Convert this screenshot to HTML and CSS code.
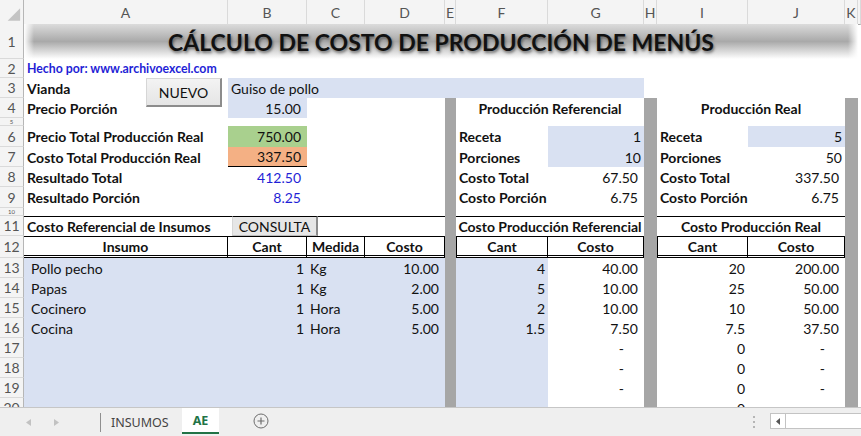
FILE: index.html
```html
<!DOCTYPE html>
<html lang="es">
<head>
  <meta charset="UTF-8">
  <title>Cálculo de costo de producción de menús</title>
  <link rel="stylesheet" href="styles.css">
</head>
<body>

  <div class="sheet">
    <!-- Cabecera de columnas -->
    <div class="row h24 colhead">
      <div class="corner"><svg width="24" height="24" viewBox="0 0 24 24"><polygon points="21,8 21,21 8,21" fill="#c4c4c4"/></svg></div>
      <div>A</div><div>B</div><div>C</div><div>D</div><div>E</div><div>F</div>
      <div>G</div><div>H</div><div>I</div><div>J</div><div>K</div><div></div>
    </div>

    <div class="row h35">
      <div class="rh">1</div>
      <div class="title">CÁLCULO DE COSTO DE PRODUCCIÓN DE MENÚS</div>
    </div>

    <div class="row h19">
      <div class="rh">2</div>
      <div class="cA w3 l credit">Hecho por: www.archivoexcel.com</div>
    </div>

    <div class="row h20">
      <div class="rh">3</div>
      <div class="cA l b">Vianda</div>
      <div class="cB w6 l fill">Guiso de pollo</div>
    </div>

    <div class="row h20">
      <div class="rh">4</div>
      <div class="cA l b">Precio Porción</div>
      <div class="cB acc fill">15.00</div>
      <div class="cE sep"></div>
      <div class="cF w2 c b">Producción Referencial</div>
      <div class="cH sep"></div>
      <div class="cI w2 c b">Producción Real</div>
      <div class="cK sep"></div>
    </div>

    <div class="row h8">
      <div class="rh short">5</div>
      <div class="cE sep"></div><div class="cH sep"></div><div class="cK sep"></div>
    </div>

    <div class="row h21">
      <div class="rh">6</div>
      <div class="cA l b">Precio Total Producción Real</div>
      <div class="cB acc green">750.00</div>
      <div class="cE sep"></div>
      <div class="cF l b">Receta</div>
      <div class="cG r fill">1</div>
      <div class="cH sep"></div>
      <div class="cI l b">Receta</div>
      <div class="cJ r fill">5</div>
      <div class="cK sep"></div>
    </div>

    <div class="row h20">
      <div class="rh">7</div>
      <div class="cA l b">Costo Total Producción Real</div>
      <div class="cB acc orange underline">337.50</div>
      <div class="cE sep"></div>
      <div class="cF l b">Porciones</div>
      <div class="cG r fill">10</div>
      <div class="cH sep"></div>
      <div class="cI l b">Porciones</div>
      <div class="cJ r">50</div>
      <div class="cK sep"></div>
    </div>

    <div class="row h20">
      <div class="rh">8</div>
      <div class="cA l b">Resultado Total</div>
      <div class="cB acc result">412.50</div>
      <div class="cE sep"></div>
      <div class="cF l b">Costo Total</div>
      <div class="cG acc">67.50</div>
      <div class="cH sep"></div>
      <div class="cI l b">Costo Total</div>
      <div class="cJ acc">337.50</div>
      <div class="cK sep"></div>
    </div>

    <div class="row h21">
      <div class="rh">9</div>
      <div class="cA l b">Resultado Porción</div>
      <div class="cB acc result">8.25</div>
      <div class="cE sep"></div>
      <div class="cF l b">Costo Porción</div>
      <div class="cG acc">6.75</div>
      <div class="cH sep"></div>
      <div class="cI l b">Costo Porción</div>
      <div class="cJ acc">6.75</div>
      <div class="cK sep"></div>
    </div>

    <div class="row h8">
      <div class="rh short">10</div>
      <div class="cE sep"></div><div class="cH sep"></div><div class="cK sep"></div>
    </div>

    <div class="row h20">
      <div class="rh">11</div>
      <div class="cA w4 l b top">Costo Referencial de Insumos</div>
      <div class="cE sep"></div>
      <div class="cF w2 c b top">Costo Producción Referencial</div>
      <div class="cH sep"></div>
      <div class="cI w2 c b top">Costo Producción Real</div>
      <div class="cK sep"></div>
    </div>

    <div class="row h22">
      <div class="rh">12</div>
      <div class="cA th">Insumo</div>
      <div class="cB th">Cant</div>
      <div class="cC th">Medida</div>
      <div class="cD th">Costo</div>
      <div class="cE sep"></div>
      <div class="cF th first">Cant</div>
      <div class="cG th">Costo</div>
      <div class="cH sep"></div>
      <div class="cI th first">Cant</div>
      <div class="cJ th">Costo</div>
      <div class="cK sep"></div>
    </div>

    <div class="row h20">
      <div class="rh">13</div>
      <div class="cA in fill">Pollo pecho</div>
      <div class="cB r fill">1</div>
      <div class="cC l fill">Kg</div>
      <div class="cD acc fill">10.00</div>
      <div class="cE sep"></div>
      <div class="cF r fill">4</div>
      <div class="cG acc">40.00</div>
      <div class="cH sep"></div>
      <div class="cI r">20</div>
      <div class="cJ acc">200.00</div>
      <div class="cK sep"></div>
    </div>

    <div class="row h20">
      <div class="rh">14</div>
      <div class="cA in fill">Papas</div>
      <div class="cB r fill">1</div>
      <div class="cC l fill">Kg</div>
      <div class="cD acc fill">2.00</div>
      <div class="cE sep"></div>
      <div class="cF r fill">5</div>
      <div class="cG acc">10.00</div>
      <div class="cH sep"></div>
      <div class="cI r">25</div>
      <div class="cJ acc">50.00</div>
      <div class="cK sep"></div>
    </div>

    <div class="row h20">
      <div class="rh">15</div>
      <div class="cA in fill">Cocinero</div>
      <div class="cB r fill">1</div>
      <div class="cC l fill">Hora</div>
      <div class="cD acc fill">5.00</div>
      <div class="cE sep"></div>
      <div class="cF r fill">2</div>
      <div class="cG acc">10.00</div>
      <div class="cH sep"></div>
      <div class="cI r">10</div>
      <div class="cJ acc">50.00</div>
      <div class="cK sep"></div>
    </div>

    <div class="row h20">
      <div class="rh">16</div>
      <div class="cA in fill">Cocina</div>
      <div class="cB r fill">1</div>
      <div class="cC l fill">Hora</div>
      <div class="cD acc fill">5.00</div>
      <div class="cE sep"></div>
      <div class="cF r fill">1.5</div>
      <div class="cG acc">7.50</div>
      <div class="cH sep"></div>
      <div class="cI r">7.5</div>
      <div class="cJ acc">37.50</div>
      <div class="cK sep"></div>
    </div>

    <div class="row h20">
      <div class="rh">17</div>
      <div class="cA w4 fill"></div>
      <div class="cE sep"></div>
      <div class="cF fill"></div>
      <div class="cG dash">-</div>
      <div class="cH sep"></div>
      <div class="cI r">0</div>
      <div class="cJ dash">-</div>
      <div class="cK sep"></div>
    </div>

    <div class="row h20">
      <div class="rh">18</div>
      <div class="cA w4 fill"></div>
      <div class="cE sep"></div>
      <div class="cF fill"></div>
      <div class="cG dash">-</div>
      <div class="cH sep"></div>
      <div class="cI r">0</div>
      <div class="cJ dash">-</div>
      <div class="cK sep"></div>
    </div>

    <div class="row h20">
      <div class="rh">19</div>
      <div class="cA w4 fill"></div>
      <div class="cE sep"></div>
      <div class="cF fill"></div>
      <div class="cG dash">-</div>
      <div class="cH sep"></div>
      <div class="cI r">0</div>
      <div class="cJ dash">-</div>
      <div class="cK sep"></div>
    </div>

    <!-- fila 20 cortada por la barra de hojas -->
    <div class="row cut">
      <div class="rh">20</div>
      <div class="cA w4 fill"></div>
      <div class="cE sep"></div>
      <div class="cF fill"></div>
      <div class="cH sep"></div>
      <div class="cI r">0</div>
      <div class="cK sep"></div>
    </div>

    <!-- Botones de formulario -->
    <div class="btn btn-nuevo">NUEVO</div>
    <div class="btn btn-consulta">CONSULTA</div>
  </div>

  <!-- Barra de hojas -->
  <div class="tabs">
    <div class="tab-nav">
      <svg width="5" height="7" viewBox="0 0 5 7"><polygon points="5,0 5,7 0,3.5" fill="#c2c2c2"/></svg>
      <svg width="5" height="7" viewBox="0 0 5 7"><polygon points="0,0 0,7 5,3.5" fill="#c2c2c2"/></svg>
    </div>
    <div class="tab-divider"></div>
    <div class="tab">INSUMOS</div>
    <div class="tab active">AE</div>
    <div class="tab-add">
      <svg width="16" height="16" viewBox="0 0 16 16">
        <circle cx="8" cy="8" r="7" fill="none" stroke="#6e6e6e" stroke-width="1"/>
        <path d="M8 4.5v7M4.5 8h7" stroke="#6e6e6e" stroke-width="1.2"/>
      </svg>
    </div>
    <div class="tab-space"></div>
    <div class="tab-grip"><span></span><span></span><span></span></div>
    <div class="hscroll">
      <div class="hscroll-btn"><svg width="4" height="7" viewBox="0 0 4 7"><polygon points="4,0 4,7 0,3.5" fill="#555"/></svg></div>
    </div>
  </div>

</body>
</html>
```

FILE: styles.css
```css
* {
  box-sizing: border-box;
}

html, body {
  margin: 0;
  padding: 0;
}

body {
  width: 861px;
  height: 436px;
  overflow: hidden;
  font-family: Lato, 'Liberation Sans', sans-serif;
  font-size: 14px;
  color: #111;
  background: #fff;
}

/* Hoja */
.sheet {
  position: relative;
  height: 407px;
  overflow: hidden;
}

.row {
  display: grid;
  grid-template-columns: 24px 204px 79px 58px 80px 11px 92px 96px 13px 91px 97px 13px 3px;
}

.row > div {
  display: flex;
  align-items: center;
  white-space: nowrap;
}

.h8 { height: 8px; }
.h19 { height: 19px; }
.h20 { height: 20px; }
.h21 { height: 21px; }
.h22 { height: 22px; }
.h24 { height: 24px; }
.h35 { height: 35px; }

.cut {
  height: 9px;
  overflow: hidden;
  grid-template-rows: 20px;
}

/* columnas */
.cA { grid-column: 2; }
.cB { grid-column: 3; }
.cC { grid-column: 4; }
.cD { grid-column: 5; }
.cE { grid-column: 6; }
.cF { grid-column: 7; }
.cG { grid-column: 8; }
.cH { grid-column: 9; }
.cI { grid-column: 10; }
.cJ { grid-column: 11; }
.cK { grid-column: 12; }

.w2 { grid-column-end: span 2; }
.w3 { grid-column-end: span 3; }
.w4 { grid-column-end: span 4; }
.w6 { grid-column-end: span 6; }

/* cabeceras */
.colhead > div {
  justify-content: center;
  background: #f4f4f4;
  color: #555;
  border-right: 1px solid #dadada;
  border-bottom: 1px solid #a9a9a9;
}

.colhead > .corner {
  padding: 0;
  border-right-color: #b6b6b6;
}

.rh {
  grid-column: 1;
  justify-content: center;
  background: #f4f4f4;
  color: #555;
  border-right: 1px solid #b6b6b6;
  border-bottom: 1px solid #dadada;
  overflow: hidden;
}

.row > .rh.short {
  font-size: 6px;
  line-height: 7px;
  overflow: visible;
}

/* titulo */
.row > .title {
  grid-column: 2 / 13;
  justify-content: center;
  font-size: 23px;
  font-weight: 700;
  color: #111;
  text-shadow: 1px 2px 3px rgba(0, 0, 0, 0.5);
  background:
    linear-gradient(to right, #fff, rgba(255, 255, 255, 0) 10px, rgba(255, 255, 255, 0) calc(100% - 10px), #fff),
    linear-gradient(#dcdcdc, #a9a9a9 50%, #fff);
}

/* celdas */
.l { padding-left: 3px; }
.in { padding-left: 7px; }
.row > .r { justify-content: flex-end; padding-right: 3px; }
.row > .acc { justify-content: flex-end; padding-right: 6px; }
.row > .dash { justify-content: flex-end; padding-right: 20px; }
.row > .c { justify-content: center; }
.b { font-weight: 700; }

.credit {
  font-size: 12.3px;
  font-weight: 700;
  color: #1f1fd6;
}

.result { color: #1f1fd6; }

.fill { background: #d9e1f2; }
.green { background: #a9d08e; }
.orange { background: #f4b084; }
.underline { border-bottom: 1px solid #000; }
.top { border-top: 1px solid #000; }

.sep { background: #a6a6a6; }

.row > .th {
  justify-content: center;
  font-weight: 700;
  border-top: 1px solid #000;
  border-right: 1px solid #000;
  border-bottom: 3px double #000;
}

.th.first { border-left: 1px solid #000; }

/* botones de formulario (flotan sobre las celdas) */
.btn {
  position: absolute;
  display: flex;
  align-items: center;
  justify-content: center;
  font-size: 14px;
  color: #111;
  background: linear-gradient(#f3f3f3, #e5e5e5);
  border: 1px solid #d6d6d6;
  border-right: 2px solid #8c8c8c;
  border-bottom: 2px solid #8c8c8c;
}

.btn-nuevo {
  left: 146px;
  top: 78px;
  width: 76px;
  height: 29px;
}

.btn-consulta {
  left: 232px;
  top: 216px;
  width: 86px;
  height: 20px;
  background: #e6e6e6;
  border-top-color: #000;
  border-bottom: 1px solid #bdbdbd;
}

/* Barra de hojas */
.tabs {
  height: 29px;
  display: flex;
  background: #efefef;
  border-top: 1px solid #c6c6c6;
  font-family: 'Noto Sans', 'Open Sans', sans-serif;
  font-size: 12.5px;
  color: #444;
}

.tab-nav {
  width: 100px;
  display: flex;
  align-items: center;
  gap: 23px;
  padding-left: 26px;
}

.tab-divider {
  width: 1px;
  margin: 5px 0 4px;
  background: #8f8f8f;
}

.tab {
  display: flex;
  align-items: center;
  padding: 0 10px;
}

.tab.active {
  margin-left: 3px;
  padding: 0 11px;
  height: 26px;
  background: #fff;
  color: #217346;
  font-weight: 700;
  border-bottom: 2px solid #217346;
}

.tab-add {
  display: flex;
  align-items: center;
  margin-left: 34px;
  padding-bottom: 2px;
}

.tab-space {
  flex: 1;
}

.tab-grip {
  display: flex;
  flex-direction: column;
  justify-content: center;
  gap: 3px;
  margin-right: 15px;
}

.tab-grip span {
  width: 2px;
  height: 2px;
  background: #b5b5b5;
}

.hscroll {
  width: 91px;
  height: 16px;
  margin-top: 5px;
  background: #fff;
  border: 1px solid #c3c3c3;
  border-right: 0;
}

.hscroll-btn {
  width: 15px;
  height: 100%;
  display: flex;
  align-items: center;
  justify-content: center;
  border-right: 1px solid #c3c3c3;
}
```
